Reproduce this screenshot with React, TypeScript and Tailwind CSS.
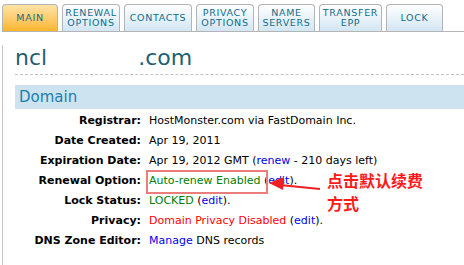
const tabs = [
  { label: ["MAIN"], w: "w-[56px]", active: true },
  { label: ["RENEWAL", "OPTIONS"], w: "w-[58px]" },
  { label: ["CONTACTS"], w: "w-[68px]" },
  { label: ["PRIVACY", "OPTIONS"], w: "w-[58px]" },
  { label: ["NAME", "SERVERS"], w: "w-[57px]" },
  { label: ["TRANSFER", "EPP"], w: "w-[63px]" },
  { label: ["LOCK"], w: "w-[57px]" },
];

function Tab({ label, w, active }: { label: string[]; w: string; active?: boolean }) {
  return (
    <div
      className={`${w} flex h-[27px] flex-col items-center justify-center rounded-t-[4px] border border-b-0 border-[#b4b4b4] text-center text-[9.5px] leading-[10px] tracking-[0.7px] text-[#0f6d8e] ${
        active
          ? "bg-gradient-to-b from-[#ffe3a3] to-[#fbb526]"
          : "bg-gradient-to-b from-white to-[#d2e6f3]"
      }`}
    >
      {label.map((l) => (
        <span key={l}>{l}</span>
      ))}
    </div>
  );
}

function Row({ label, children }: { label: string; children: React.ReactNode }) {
  return (
    <div className="grid h-[20px] grid-cols-[126px_1fr] items-center text-[11px] leading-[20px]">
      <span className="text-right font-bold text-black">{label}</span>
      <span className="whitespace-nowrap pl-[8px] text-black">{children}</span>
    </div>
  );
}

const edit = <a className="text-[#0000ee]">edit</a>;

export default function App() {
  return (
    <div className="relative h-[265px] w-[464px] overflow-hidden bg-white pl-[2px] pt-[4px] font-['DejaVu_Sans',sans-serif]">
      <div className="flex gap-[4px] border-b border-[#b4b4b4]">
        {tabs.map((t) => (
          <Tab key={t.label.join()} {...t} />
        ))}
      </div>

      <div className="h-[240px] border-l border-[#c4c4c4] pl-[12px]">
        {/* part of the domain name is blanked out in the screenshot */}
        <div className="mt-[13px] flex text-[22px] leading-[26px] text-[#225f70]">
          <span>ncl</span>
          <span className="inline-block w-[91px]" />
          <span>.com</span>
        </div>
        <div className="mt-[3px] border-t border-dashed border-[#c4c4c4]" />

        <div className="mt-[10px] h-[24px] bg-[#cde3f0] pl-[4px] text-[15px] leading-[24px] text-[#1a7fb0]">
          Domain
        </div>

        <div className="mt-[2px]">
          <Row label="Registrar:">HostMonster.com via FastDomain Inc.</Row>
          <Row label="Date Created:">Apr 19, 2011</Row>
          <Row label="Expiration Date:">
            Apr 19, 2012 GMT (<a className="text-[#0000ee]">renew</a> - 210 days left)
          </Row>
          <Row label="Renewal Option:">
            <span className="relative">
              <span className="text-[#008000]">Auto-renew Enabled</span>
              <span className="absolute left-[-3px] top-[-4px] h-[24px] w-[122px] border-2 border-[#ec7d7d]" />
            </span>{" "}
            ({edit}).
          </Row>
          <Row label="Lock Status:">
            <span className="text-[#008000]">LOCKED</span> ({edit}).
          </Row>
          <Row label="Privacy:">
            <span className="text-[#ff0000]">Domain Privacy Disabled</span> ({edit}).
          </Row>
          <Row label="DNS Zone Editor:">
            <a className="text-[#0000ee]">Manage</a> DNS records
          </Row>
        </div>
      </div>

      <svg className="absolute left-0 top-0" width="464" height="265">
        <line x1="280" y1="185" x2="320" y2="189" stroke="#ee2020" strokeWidth="2" />
        <polygon points="269,183 284,177 283,190" fill="#ee2020" />
      </svg>
      <p className="absolute left-[327px] top-[169px] font-['Noto_Sans_CJK_SC',sans-serif] text-[16px] font-bold leading-[23px] text-[#ff1a1a]">
        点击默认续费
        <br />
        方式
      </p>
    </div>
  );
}
